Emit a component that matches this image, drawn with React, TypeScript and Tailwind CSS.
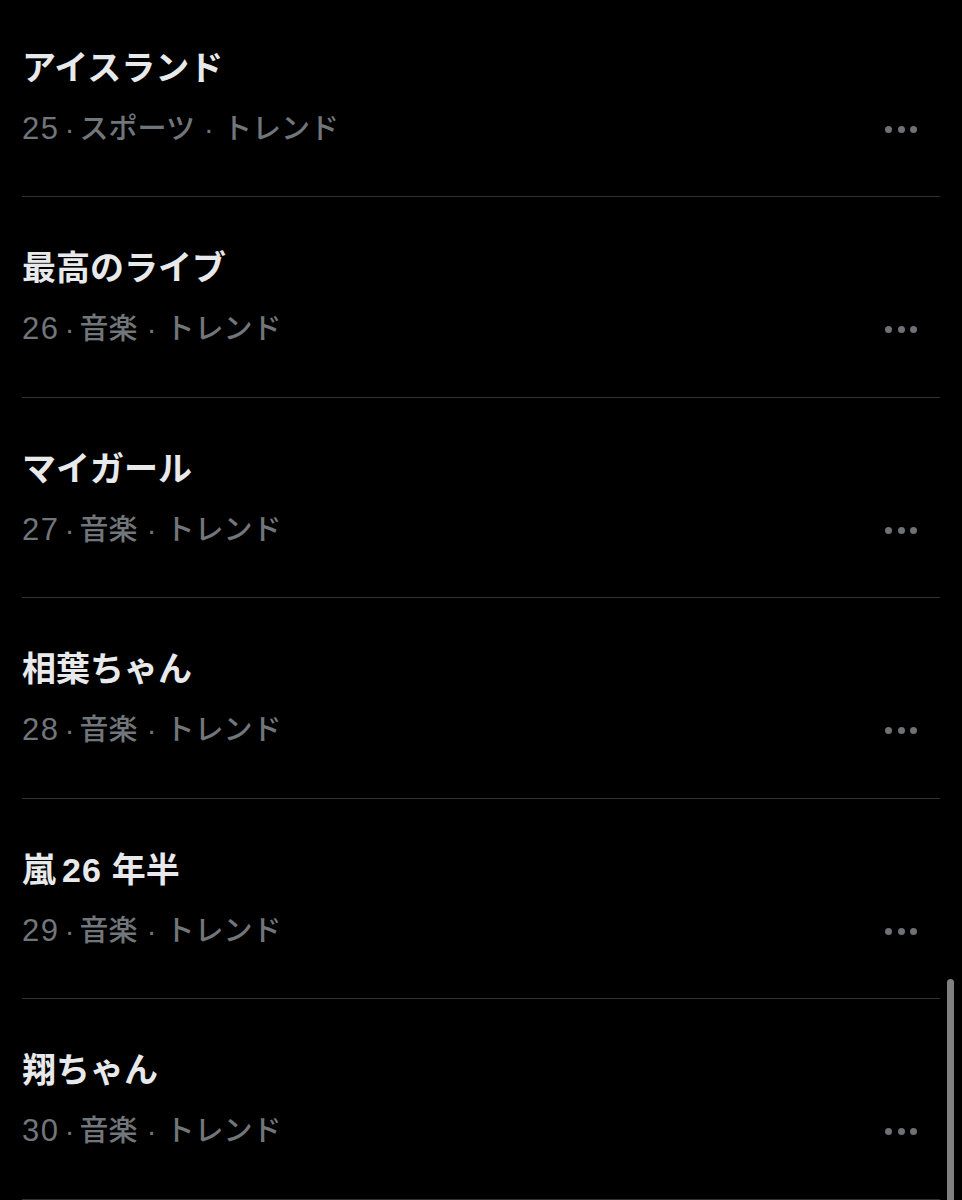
import React from 'react';

interface Trend { rank: number; name: React.ReactNode; category: string }

const TRENDS: Trend[] = [
  { rank: 25, name: 'アイスランド', category: 'スポーツ' },
  { rank: 26, name: '最高のライブ', category: '音楽' },
  { rank: 27, name: 'マイガール', category: '音楽' },
  { rank: 28, name: '相葉ちゃん', category: '音楽' },
  { rank: 29, name: <>嵐<span className="ml-[6px] mr-[10px] tracking-[1px]">26</span>年半</>, category: '音楽' },
  { rank: 30, name: '翔ちゃん', category: '音楽' },
];

const FONT = 'font-["Liberation_Sans","Noto_Sans_CJK_JP",sans-serif]';

export default function App() {
  return (
    <div className={`relative h-[1200px] overflow-hidden bg-black ${FONT}`}>
      <div className="px-[22px] -mt-[3.5px]">
        {TRENDS.map((t) => (
          <div key={t.rank} className="h-[200.5px] border-b border-[#2f3336] flex items-start justify-between">
            <div className="pt-[51px]">
              <div className="h-[40px] leading-[40px] text-[34px] font-semibold text-[#e7e9ea] whitespace-nowrap">{t.name}</div>
              <div className="mt-[24px] h-[34px] leading-[34px] text-[29px] font-medium text-[#71767b] whitespace-nowrap flex items-center">
                <span className="text-[31px] tracking-[1.5px]">{t.rank}</span>
                <span className="inline-block w-[20px] text-center">·</span>
                <span>{t.category}</span>
                <span className="inline-block w-[28px] text-center">·</span>
                <span>トレンド</span>
              </div>
            </div>
            <Dots />
          </div>
        ))}
      </div>
      {/* scroll indicator */}
      <div className="absolute left-[947px] top-[979px] w-[7px] h-[240px] rounded-full bg-[#808080]" />
    </div>
  );
}

function Dots() {
  return (
    <div className="mt-[129px] mr-[23px] flex items-center gap-[5.5px]">
      <span className="w-[7px] h-[7px] rounded-full bg-[#6e7175]" />
      <span className="w-[7px] h-[7px] rounded-full bg-[#6e7175]" />
      <span className="w-[7px] h-[7px] rounded-full bg-[#6e7175]" />
    </div>
  );
}
